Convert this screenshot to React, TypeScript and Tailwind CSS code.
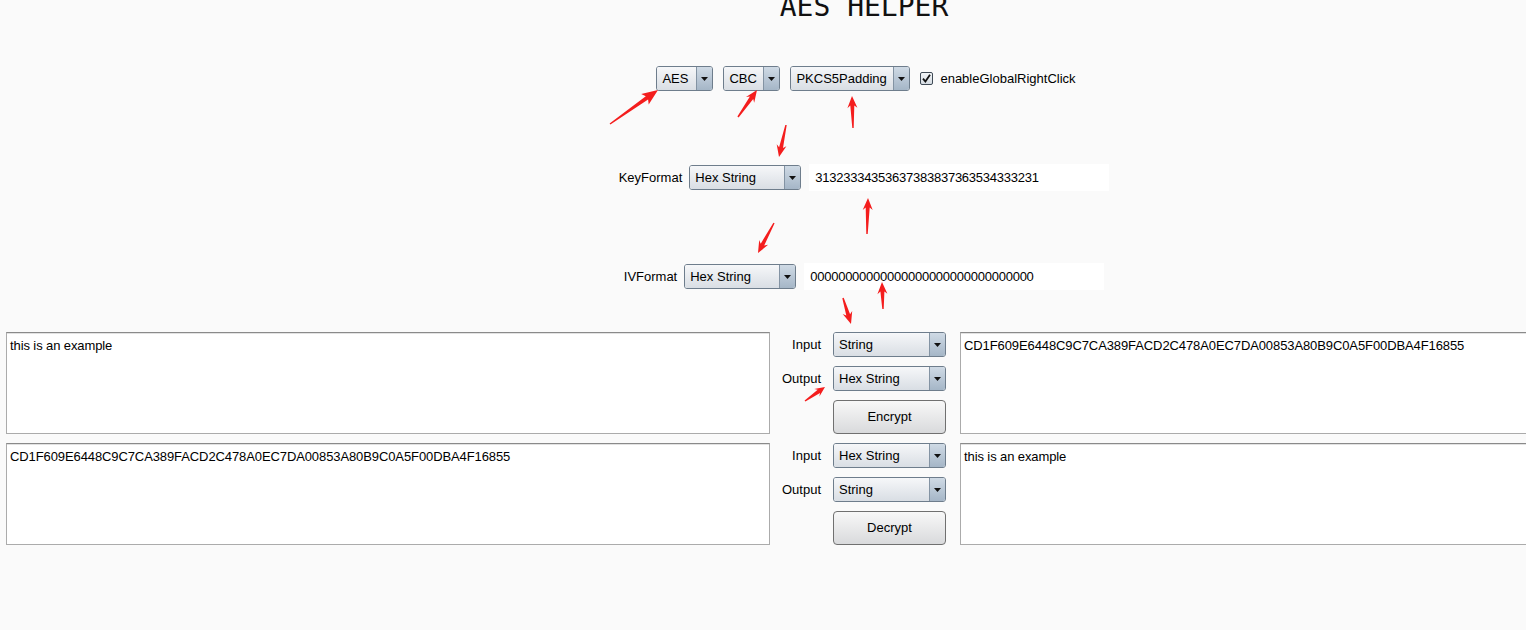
import React from "react";

type ComboProps = { value: string; className: string };

function Combo({ value, className }: ComboProps) {
  return (
    <div
      className={`flex h-[25px] shrink-0 overflow-hidden rounded-[3px] border border-[#6e7d8c] ${className}`}
    >
      <div className="flex flex-1 items-center bg-linear-to-b from-[#f6f7f9] to-[#d9dee4] pl-[5px] text-[13px] text-black">
        {value}
      </div>
      <div className="flex w-[16px] items-center justify-center border-l border-[#8393a3] bg-linear-to-b from-[#cfdae5] to-[#a5b6c7]">
        <svg width="7" height="4" viewBox="0 0 7 4">
          <polygon points="0,0 7,0 3.5,4" fill="#111" />
        </svg>
      </div>
    </div>
  );
}

function Button({ label }: { label: string }) {
  return (
    <div className="flex h-[34px] w-[113px] items-center justify-center rounded-[4px] border border-[#707070] bg-linear-to-b from-[#f8f8f8] to-[#d9dadc] text-[13px] text-black">
      {label}
    </div>
  );
}

function TextBox({ text }: { text: string }) {
  return (
    <div className="h-[102px] w-[764px] shrink-0 border border-[#ababab] border-t-[#8a8a8a] bg-white pl-[3px] pt-[5px] text-[13px] leading-[15px] tracking-[-0.1px] text-black shadow-[inset_0_1px_0_#e2e2e2]">
      {text}
    </div>
  );
}

type ArrowProps = { x1: number; y1: number; x2: number; y2: number; head?: number; hw?: number };

// red annotation arrow, tail (x1,y1) -> tip (x2,y2)
function Arrow({ x1, y1, x2, y2, head = 12, hw = 5 }: ArrowProps) {
  const dx = x2 - x1;
  const dy = y2 - y1;
  const len = Math.hypot(dx, dy);
  const ux = dx / len;
  const uy = dy / len;
  const nx = -uy;
  const ny = ux;
  const bx = x2 - ux * head;
  const by = y2 - uy * head;
  const sx = bx + ux * 2.5;
  const sy = by + uy * 2.5;
  const sw = 2;
  const pts = [
    [x1 + nx * 0.7, y1 + ny * 0.7],
    [sx + nx * sw, sy + ny * sw],
    [bx + nx * hw, by + ny * hw],
    [x2, y2],
    [bx - nx * hw, by - ny * hw],
    [sx - nx * sw, sy - ny * sw],
    [x1 - nx * 0.7, y1 - ny * 0.7],
  ]
    .map((p) => `${p[0].toFixed(1)},${p[1].toFixed(1)}`)
    .join(" ");
  return <polygon points={pts} fill="#f41d1d" />;
}

export default function App() {
  return (
    <div className="relative h-[630px] w-[1526px] overflow-hidden bg-[#fafafa] font-['Liberation_Sans',Arial,sans-serif]">
      <div className="flex w-[1728px] flex-col items-center">
        {/* ===== TITLE ===== */}
        <h1 className="-mt-[7px] h-[28px] font-['DejaVu_Sans_Mono',monospace] text-[28px] leading-[28px] text-[#111]">
          AES HELPER
        </h1>

        {/* ===== ALGORITHM / MODE / PADDING ===== */}
        <div className="mt-[45px] flex items-center gap-[10px] pl-[4px]">
          <Combo value="AES" className="w-[57px]" />
          <Combo value="CBC" className="w-[57px]" />
          <Combo value="PKCS5Padding" className="w-[120px]" />
          <div className="flex items-center gap-[7px]">
            <svg width="13" height="13" viewBox="0 0 13 13">
              <defs>
                <linearGradient id="cb" x1="0" y1="0" x2="0" y2="1">
                  <stop offset="0" stopColor="#f3f5f7" />
                  <stop offset="1" stopColor="#d3dae1" />
                </linearGradient>
              </defs>
              <rect x="0.5" y="0.5" width="12" height="12" rx="1.5" fill="url(#cb)" stroke="#3f4a55" />
              <path d="M3 6.6 L5.4 9.6 L10 2.8" fill="none" stroke="#111" strokeWidth="1.8" />
            </svg>
            <span className="text-[13px] text-black">enableGlobalRightClick</span>
          </div>
        </div>

        {/* ===== KEY ===== */}
        <div className="mt-[73px] flex items-center">
          <span className="text-[13px] text-black">KeyFormat</span>
          <Combo value="Hex String" className="ml-[7px] w-[112px]" />
          <div className="ml-[8px] flex h-[27px] w-[300px] items-center bg-white pl-[6px] text-[13px] tracking-[-0.25px] text-black">
            31323334353637383837363534333231
          </div>
        </div>

        {/* ===== IV ===== */}
        <div className="mt-[72px] flex items-center">
          <span className="text-[13px] text-black">IVFormat</span>
          <Combo value="Hex String" className="ml-[7px] w-[112px]" />
          <div className="ml-[8px] flex h-[27px] w-[300px] items-center bg-white pl-[6px] text-[13px] tracking-[-0.25px] text-black">
            00000000000000000000000000000000
          </div>
        </div>

        {/* ===== ENCRYPT ===== */}
        <div className="mt-[42px] flex w-full pl-[6px]">
          <TextBox text="this is an example" />
          <div className="ml-[6px] flex w-[170px] flex-col gap-[9px]">
            <div className="flex items-center">
              <span className="w-[45px] text-right text-[13px]">Input</span>
              <Combo value="String" className="ml-[12px] w-[113px]" />
            </div>
            <div className="flex items-center">
              <span className="w-[45px] text-right text-[13px]">Output</span>
              <Combo value="Hex String" className="ml-[12px] w-[113px]" />
            </div>
            <div className="ml-[57px]">
              <Button label="Encrypt" />
            </div>
          </div>
          <div className="ml-[14px]">
            <TextBox text="CD1F609E6448C9C7CA389FACD2C478A0EC7DA00853A80B9C0A5F00DBA4F16855" />
          </div>
        </div>

        {/* ===== DECRYPT ===== */}
        <div className="mt-[9px] flex w-full pl-[6px]">
          <TextBox text="CD1F609E6448C9C7CA389FACD2C478A0EC7DA00853A80B9C0A5F00DBA4F16855" />
          <div className="ml-[6px] flex w-[170px] flex-col gap-[9px]">
            <div className="flex items-center">
              <span className="w-[45px] text-right text-[13px]">Input</span>
              <Combo value="Hex String" className="ml-[12px] w-[113px]" />
            </div>
            <div className="flex items-center">
              <span className="w-[45px] text-right text-[13px]">Output</span>
              <Combo value="String" className="ml-[12px] w-[113px]" />
            </div>
            <div className="ml-[57px]">
              <Button label="Decrypt" />
            </div>
          </div>
          <div className="ml-[14px]">
            <TextBox text="this is an example" />
          </div>
        </div>
      </div>

      {/* ===== ANNOTATION ARROWS ===== */}
      <svg className="pointer-events-none absolute inset-0" width="1526" height="630">
        <Arrow x1={610} y1={124} x2={658} y2={90} head={16} hw={6.5} />
        <Arrow x1={738} y1={117} x2={757} y2={90} />
        <Arrow x1={853} y1={128} x2={852} y2={96} />
        <Arrow x1={786} y1={125} x2={779} y2={157} />
        <Arrow x1={867} y1={234} x2={868} y2={198} />
        <Arrow x1={774} y1={223} x2={758} y2={253} />
        <Arrow x1={883} y1={309} x2={882} y2={282} />
        <Arrow x1={843} y1={298} x2={851} y2={324} />
        <Arrow x1={805} y1={401} x2={825} y2={387} head={10} hw={4.5} />
      </svg>
    </div>
  );
}
